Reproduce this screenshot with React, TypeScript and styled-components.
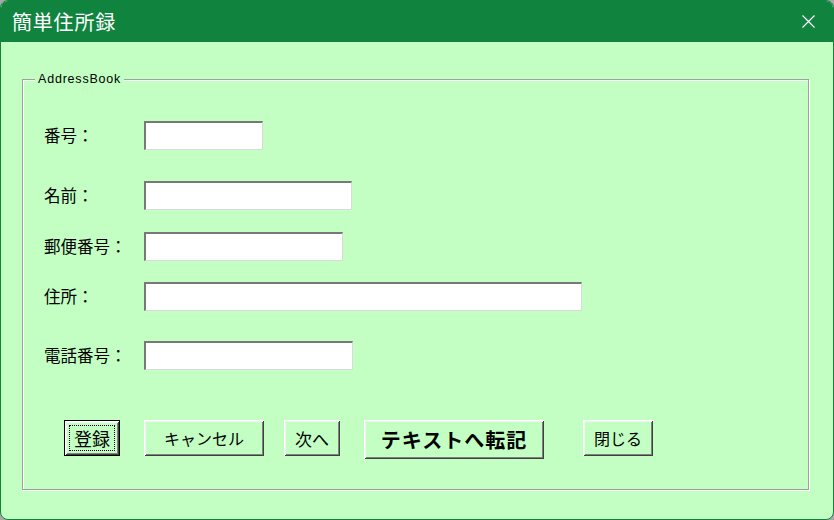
import React from "react";
import styled, { createGlobalStyle } from "styled-components";

const BG = "#c3ffc3";
const GREEN = "#10843f";
const JP = `"Noto Sans CJK JP", "Noto Sans", sans-serif`;

const Global = createGlobalStyle`
  html, body { margin: 0; padding: 0; background: #a8a8a8; }
  #root { width: 834px; height: 520px; }
`;

const Window = styled.div`
  box-sizing: border-box;
  width: 834px;
  height: 520px;
  border-radius: 8px;
  overflow: hidden;
  background: ${BG};
  border: 1px solid ${GREEN};
  display: flex;
  flex-direction: column;
  font-family: ${JP};
`;

const TitleBar = styled.div`
  height: 41px;
  flex: none;
  background: ${GREEN};
  display: flex;
  align-items: center;
  justify-content: space-between;
  padding: 0 18px 0 11px;
`;

const Title = styled.div`
  color: #fff;
  font-size: 20px;
  letter-spacing: 0.8px;
  line-height: 1;
  margin-top: 1px;
`;

const Close = styled.svg`
  width: 13px;
  height: 13px;
  display: block;
`;

const Content = styled.div`
  flex: 1;
`;

const GroupBox = styled.div`
  position: relative;
  box-sizing: border-box;
  width: 787px;
  height: 411px;
  margin: 37px 0 0 21px;
  border: 1px solid #a0a0a0;
  box-shadow: inset 1px 1px 0 #fff, 1px 1px 0 #fff;
  padding: 41px 0 0 21px;
`;

const Legend = styled.span`
  position: absolute;
  top: -8px;
  left: 12px;
  padding: 0 3px;
  background: ${BG};
  font-family: "Liberation Sans", Arial, sans-serif;
  font-size: 12.5px;
  letter-spacing: 0.8px;
  line-height: 14px;
  color: #000;
`;

const Row = styled.div<{ $mt: number }>`
  display: flex;
  align-items: center;
  height: 29px;
  margin-top: ${(p) => p.$mt}px;
`;

const Label = styled.span`
  width: 100px;
  flex: none;
  font-size: 16.5px;
  color: #000;
  line-height: 1;
`;

const Field = styled.input<{ $w: number }>`
  box-sizing: border-box;
  width: ${(p) => p.$w}px;
  height: 29px;
  margin: 0;
  padding: 0 4px;
  background: #fff;
  border-style: solid;
  border-width: 2px 1px 1px 2px;
  border-color: #787878 #dadada #dadada #787878;
  outline: none;
  font-family: ${JP};
  font-size: 15px;
`;

const ButtonRow = styled.div`
  display: flex;
  align-items: flex-start;
  margin-top: 50px;
  padding-left: 20px;
`;

const Button = styled.button<{
  $w: number;
  $h?: number;
  $ml: number;
  $size?: number;
  $bold?: boolean;
  $default?: boolean;
}>`
  box-sizing: border-box;
  width: ${(p) => p.$w}px;
  height: ${(p) => p.$h ?? 36}px;
  margin: 0 0 0 ${(p) => p.$ml}px;
  padding: ${(p) => (p.$default ? "4px" : "0")};
  background: ${BG};
  border: ${(p) => (p.$default ? "1px solid #000" : "none")};
  box-shadow: inset 1px 1px 0 #fff, inset -1px -1px 0 #404040,
    inset 2px 2px 0 #f4f4f4, inset -2px -2px 0 #808080;
  display: flex;
  align-items: center;
  justify-content: center;
  font-family: ${JP};
  font-size: ${(p) => p.$size ?? 16}px;
  font-weight: ${(p) => (p.$bold ? 700 : 400)};
  letter-spacing: ${(p) => (p.$bold ? "1px" : "0")};
  color: #000;
  line-height: 1;
  cursor: default;
`;

const Focus = styled.span`
  box-sizing: border-box;
  flex: 1;
  align-self: stretch;
  border: 1px dotted #000;
  display: flex;
  align-items: center;
  justify-content: center;
`;

const fields = [
  { label: "番号：", w: 119, mt: 0 },
  { label: "名前：", w: 208, mt: 31 },
  { label: "郵便番号：", w: 199, mt: 22 },
  { label: "住所：", w: 438, mt: 21 },
  { label: "電話番号：", w: 209, mt: 30 },
];

export default function App() {
  return (
    <>
      <Global />
      <Window>
        <TitleBar>
          <Title>簡単住所録</Title>
          <Close viewBox="0 0 13 13">
            <path d="M0.5 0.5 L12.5 12.5 M12.5 0.5 L0.5 12.5" stroke="#fff" strokeWidth="1.2" fill="none" />
          </Close>
        </TitleBar>
        <Content>
          <GroupBox>
            <Legend>AddressBook</Legend>
            {fields.map((f) => (
              <Row key={f.label} $mt={f.mt}>
                <Label>{f.label}</Label>
                <Field $w={f.w} />
              </Row>
            ))}
            <ButtonRow>
              <Button $w={56} $ml={0} $size={18} $default>
                <Focus>登録</Focus>
              </Button>
              <Button $w={120} $ml={24}>キャンセル</Button>
              <Button $w={56} $ml={20} $size={17}>次へ</Button>
              <Button $w={180} $h={39} $ml={24} $size={20} $bold>
                テキストへ転記
              </Button>
              <Button $w={70} $ml={39}>閉じる</Button>
            </ButtonRow>
          </GroupBox>
        </Content>
      </Window>
    </>
  );
}
